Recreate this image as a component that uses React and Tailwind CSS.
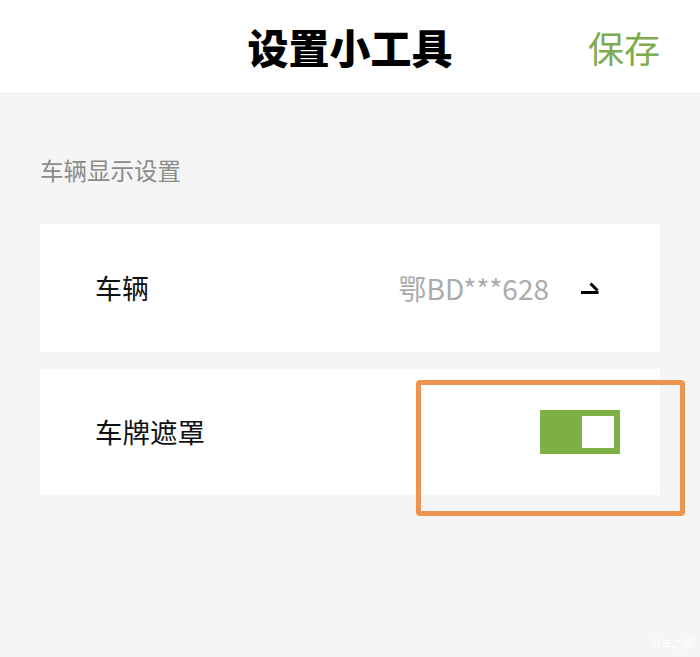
import React, { useState } from 'react';

const font = { fontFamily: '"Noto Sans CJK SC", "Noto Sans", sans-serif' };

const App = () => {
  const [masked, setMasked] = useState(true);

  return (
    <div className="relative h-[657px] w-[700px] overflow-hidden bg-[#f5f5f5]" style={font}>
      {/* Header */}
      <div className="grid h-[94px] grid-cols-[1fr_auto_1fr] items-center border-b border-[#ececec] bg-white">
        <div />
        <h1 className="text-[41px] font-black leading-none text-black">设置小工具</h1>
        <div className="flex justify-end pr-[40px]">
          <button className="text-[36px] leading-none text-[#7dab52]">保存</button>
        </div>
      </div>

      {/* Section */}
      <p className="mt-[60px] px-[40px] text-[23.5px] leading-[32px] text-[#8c8c8c]">车辆显示设置</p>

      <div className="mx-[40px] mt-[38px] flex flex-col gap-[17px]">
        <div className="flex h-[128px] items-center bg-white pl-[55px] pr-[61px]">
          <span className="text-[27px] text-[#111]">车辆</span>
          <span className="ml-auto text-[28px] text-[#ababab]">鄂BD***628</span>
          <svg className="ml-[32px]" width="18" height="12" viewBox="0 0 18 12" fill="none">
            <path d="M0 10.5 H17.5 M9.5 1.5 L16.5 8.5" stroke="#000" strokeWidth="3" />
          </svg>
        </div>

        <div className="flex h-[126px] items-center bg-white pl-[55px] pr-[40px]">
          <span className="text-[27.5px] text-[#111]">车牌遮罩</span>
          <button
            onClick={() => setMasked(!masked)}
            className={`ml-auto flex h-[44px] w-[80px] items-center p-[6px] ${masked ? 'justify-end bg-[#7cb044]' : 'justify-start bg-[#cfcfcf]'}`}
          >
            <span className="h-[32px] w-[32px] bg-white" />
          </button>
        </div>
      </div>

      {/* annotation box */}
      <div className="absolute left-[416px] top-[380px] h-[136px] w-[269px] rounded-[4px] border-[5px] border-[#ec9450]" />

      <span className="absolute bottom-[6px] right-[6px] text-[11px] text-white">汽车之家</span>
    </div>
  );
};

export default App;
